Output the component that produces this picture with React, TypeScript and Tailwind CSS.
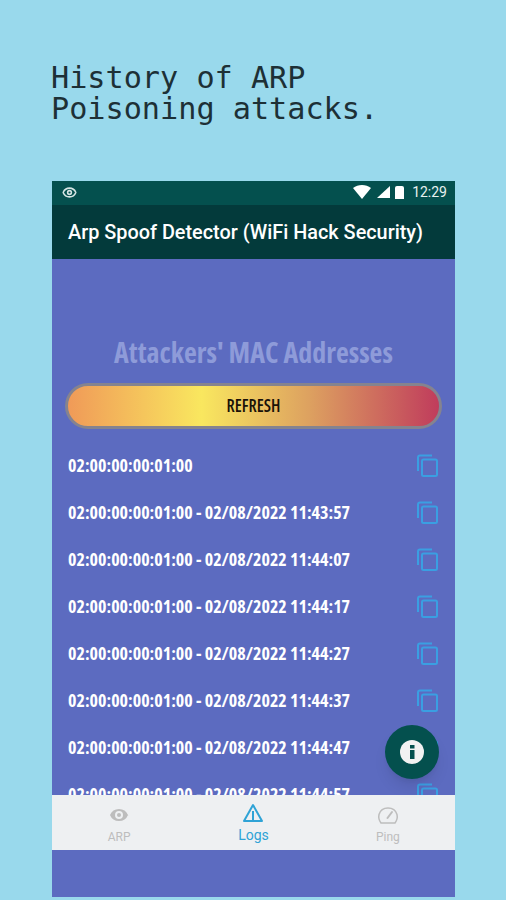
import { Eye } from "lucide-react";

const rows = [
  "02:00:00:00:01:00",
  "02:00:00:00:01:00 - 02/08/2022 11:43:57",
  "02:00:00:00:01:00 - 02/08/2022 11:44:07",
  "02:00:00:00:01:00 - 02/08/2022 11:44:17",
  "02:00:00:00:01:00 - 02/08/2022 11:44:27",
  "02:00:00:00:01:00 - 02/08/2022 11:44:37",
  "02:00:00:00:01:00 - 02/08/2022 11:44:47",
  "02:00:00:00:01:00 - 02/08/2022 11:44:57",
];

function CopyIcon() {
  return (
    <svg width="22" height="23" viewBox="0 0 22 23" fill="none" stroke="#3a9fe2" strokeWidth="2" strokeLinejoin="round" className="shrink-0">
      <path d="M15 1.500 H3 Q1 1.500 1 3.500 V17" />
      <rect x="5" y="5.500" width="15" height="16.500" rx="1.500" />
    </svg>
  );
}

export default function App() {
  return (
    <div className="w-[506px] h-[900px] bg-[#99d9ec] overflow-hidden flex flex-col relative">
      <div className="pl-[51px] pt-[62px] h-[181px] text-[#1d3036] text-[30.2px] leading-[31px] font-['DejaVu_Sans_Mono',monospace] whitespace-pre">
        <div>History of ARP</div>
        <div>Poisoning attacks.</div>
      </div>
      <div className="ml-[52px] w-[403px] h-[716px] bg-[#5c6bc0] flex flex-col relative">
        <div className="h-[24px] bg-[#04504e] flex items-center justify-between pl-[10px] pr-[8px] pb-[2px] text-[#e8f0f0] shrink-0">
          <Eye size={15} strokeWidth={2.5} className="text-[#d5e5e4]" />
          <div className="flex items-center gap-[5px] font-['Roboto',sans-serif] text-[14px]">
            <svg width="18" height="14" viewBox="0 0 18 14" fill="white"><path d="M0 3 C5 -1 13 -1 18 3 L9 14 Z" /></svg>
            <svg width="14" height="14" viewBox="0 0 14 14" fill="white"><path d="M14 1 V13 H1 Z" /></svg>
            <svg width="9" height="14" viewBox="0 0 9 14" fill="white"><path d="M2 1 H7 Q9 1 9 3 V14 H0 V3 Q0 1 2 1 Z" /></svg>
            <span className="ml-[3px]">12:29</span>
          </div>
        </div>
        <div className="h-[54px] pt-[2px] bg-[#033a3b] flex items-center pl-[16px] text-white text-[19.85px] font-medium font-['Roboto',sans-serif] shrink-0">
          Arp Spoof Detector (WiFi Hack Security)
        </div>
        <div className="h-[536px] overflow-hidden shrink-0 flex flex-col font-['Open_Sans',sans-serif] [font-stretch:75%]">
          <div className="pt-[74px] h-[125px] mb-[12px] text-center text-[#8e9bd9] text-[28px] leading-[38px] font-bold">
            Attackers' MAC Addresses
          </div>
          <div className="mx-[13px] h-[46px] rounded-full border-[3px] border-[#85838f] bg-[linear-gradient(90deg,#f09a58_0%,#f9e75f_36%,#dda160_65%,#c03c5c_100%)] flex items-center justify-center text-[#1a1208] text-[17px] font-semibold shrink-0">
            REFRESH
          </div>
          <div className="flex flex-col mt-[13px]">
            {rows.map((r) => (
              <div key={r} className="h-[47px] shrink-0 flex items-center justify-between pl-[16px] pr-[18px] text-white text-[18px] font-bold">
                <span>{r}</span>
                <span className="translate-x-[2px]"><CopyIcon /></span>
              </div>
            ))}
          </div>
        </div>
        <div className="h-[55px] bg-[#eef0f2] grid grid-cols-3 font-['Roboto',sans-serif] text-[12px] shrink-0">
          <div className="flex flex-col items-center pt-[8px] text-[#bdbdbd]">
            <Eye size={24} strokeWidth={2} fill="#bdbdbd" stroke="#eef0f2" />
            <span className="mt-[1px]">ARP</span>
          </div>
          <div className="flex flex-col items-center pt-[8px] text-[#2fa3d6]">
            <svg width="22" height="22" viewBox="0 0 22 22" fill="none" stroke="#2fa3d6" strokeWidth="2" strokeLinejoin="round">
              <path d="M11 2 L20 18 H2 Z" />
              <path d="M11 8 V18" />
            </svg>
            <span className="mt-[1px] text-[14px] leading-[18px]">Logs</span>
          </div>
          <div className="flex flex-col items-center pt-[8px] text-[#bdbdbd]">
            <svg width="22" height="24" viewBox="0 0 22 24" fill="none" stroke="#bdbdbd" strokeWidth="1.500" strokeLinecap="round">
              <path d="M4 20 H18 Q21 16 20 11.500 Q18 5 11 5 Q4 5 2 11.500 Q1 16 4 20 Z" />
              <path d="M10.500 15 L15 9" strokeWidth="2" />
            </svg>
            <span className="mt-[1px]">Ping</span>
          </div>
        </div>
        <div className="absolute left-[333px] top-[544px] w-[54px] h-[54px] rounded-full bg-[#04504e] shadow-lg flex items-center justify-center">
          <svg width="26" height="26" viewBox="0 0 26 26">
            <circle cx="13" cy="13" r="12" fill="#f2f2f2" />
            <rect x="11" y="11" width="4.500" height="9" fill="#04504e" />
            <rect x="11" y="6" width="4.500" height="3.500" fill="#04504e" />
          </svg>
        </div>
      </div>
    </div>
  );
}
